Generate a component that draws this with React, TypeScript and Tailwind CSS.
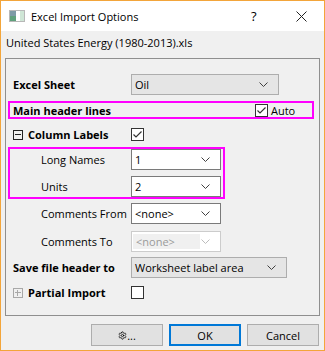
import { Settings } from "lucide-react";

const Chevron = ({ muted = false }: { muted?: boolean }) => (
  <svg width="9" height="5" viewBox="0 0 9 5" className="shrink-0">
    <polyline
      points="0.5,0.5 4.5,4.5 8.5,0.5"
      fill="none"
      stroke={muted ? "#bcbcbc" : "#404040"}
      strokeWidth="1"
    />
  </svg>
);

const Check = ({ checked = false }: { checked?: boolean }) => (
  <div className="w-[13px] h-[13px] border border-[#333] bg-white shrink-0 flex items-center justify-center">
    {checked && (
      <svg width="11" height="11" viewBox="0 0 11 11">
        <polyline points="1.5,5.5 4,8 9.5,2.5" fill="none" stroke="#333" strokeWidth="1.2" />
      </svg>
    )}
  </div>
);

interface ComboProps {
  value: string;
  width: string;
  variant?: "gray" | "white" | "disabled";
}

const Combo = ({ value, width, variant = "white" }: ComboProps) => {
  if (variant === "disabled") {
    return (
      <div className={`${width} h-[21px] border border-[#cccccc] bg-white flex items-center pl-[1px] pr-[10px] shrink-0`}>
        <div className="w-[67px] h-[15px] bg-[#f0f0f0] text-[#9a9a9a] flex items-center pl-[3px]">{value}</div>
        <div className="flex-1" />
        <Chevron muted />
      </div>
    );
  }
  const look =
    variant === "gray" ? "border-[#adadad] bg-[#e5e5e5]" : "border-[#7a7a7a] bg-white";
  return (
    <div className={`${width} h-[21px] border ${look} flex items-center pl-[3px] pr-[10px] shrink-0`}>
      <span className="flex-1">{value}</span>
      <Chevron />
    </div>
  );
};

const TreeBox = ({ open }: { open: boolean }) =>
  open ? (
    <div className="w-[10px] h-[10px] border border-[#222] flex items-center justify-center shrink-0">
      <div className="w-[6px] h-[1px] bg-[#222]" />
    </div>
  ) : (
    <div className="w-[10px] h-[10px] border border-[#a8a8a8] relative shrink-0">
      <div className="absolute left-[1px] top-[3px] w-[6px] h-[1px] bg-[#a8a8a8]" />
      <div className="absolute left-[3px] top-[1px] w-[1px] h-[6px] bg-[#a8a8a8]" />
    </div>
  );

const Button = ({ children, primary = false }: { children: React.ReactNode; primary?: boolean }) => (
  <div
    className={`w-[72px] h-[22px] bg-[#e1e1e1] flex items-center justify-center ${
      primary ? "border-2 border-[#0078d7]" : "border border-[#adadad]"
    }`}
  >
    {children}
  </div>
);

export default function App() {
  return (
    <div className="w-[325px] h-[351px] border border-[#f3a53a] bg-[#f0f0f0] flex flex-col font-['Open_Sans',sans-serif] text-[11px] text-black leading-[15px]">
      {/* title bar */}
      <div className="h-[30px] bg-white flex items-center pl-[8px] shrink-0">
        <svg width="16" height="12" viewBox="0 0 16 12" className="shrink-0">
          <rect x="0.5" y="0.5" width="15" height="11" fill="#fff" stroke="#b8b8b8" />
          <rect x="1" y="1" width="6" height="10" fill="#7d9aa6" />
          <rect x="1" y="6" width="6" height="5" fill="#5fa07c" />
          <rect x="11" y="1" width="4" height="10" fill="#cfe6d6" />
        </svg>
        <span className="ml-[6px]">Excel Import Options</span>
        <div className="flex-1" />
        <span className="text-[13px] w-[10px] mr-[35px]">?</span>
        <svg width="11" height="11" viewBox="0 0 11 11" className="mr-[17px]">
          <path d="M0.5 0.5 L10.5 10.5 M10.5 0.5 L0.5 10.5" stroke="#222" strokeWidth="1" />
        </svg>
      </div>

      {/* file name */}
      <div className="h-[27px] pl-[5px] pt-[4px] shrink-0">United States Energy (1980-2013).xls</div>

      {/* group box */}
      <div className="ml-[4px] w-[315px] h-[258px] border border-[#8f8f8f] flex flex-col shrink-0">
        <div className="mt-[15px] flex items-center pl-[7px]">
          <span className="w-[118px] font-bold">Excel Sheet</span>
          <Combo value="Oil" width="w-[148px]" variant="gray" />
        </div>

        <div className="mt-[6px] ml-[2px] w-[306px] h-[18px] border-2 border-[#ff00ff] flex items-center pl-[3px]">
          <span className="w-[242px] font-bold">Main header lines</span>
          <Check checked />
          <span className="ml-[3px]">Auto</span>
        </div>

        <div className="mt-[9px] h-[13px] flex items-center pl-[7px]">
          <TreeBox open />
          <span className="ml-[5px] w-[103px] font-bold">Column Labels</span>
          <Check checked />
        </div>

        <div className="mt-[6px] ml-[2px] w-[217px] h-[52px] border-2 border-[#ff00ff] flex flex-col pl-[31px]">
          <div className="flex items-center">
            <span className="w-[90px]">Long Names</span>
            <Combo value="1" width="w-[90px]" />
          </div>
          <div className="mt-[6px] flex items-center">
            <span className="w-[90px]">Units</span>
            <Combo value="2" width="w-[90px]" />
          </div>
        </div>

        <div className="mt-[4px] flex items-center pl-[35px]">
          <span className="w-[90px]">Comments From</span>
          <Combo value="<none>" width="w-[90px]" />
        </div>

        <div className="mt-[7px] flex items-center pl-[35px]">
          <span className="w-[90px]">Comments To</span>
          <Combo value="<none>" width="w-[90px]" variant="disabled" />
        </div>

        <div className="mt-[5px] flex items-center pl-[7px]">
          <span className="w-[118px] font-bold">Save file header to</span>
          <Combo value="Worksheet label area" width="w-[156px]" variant="gray" />
        </div>

        <div className="mt-[8px] h-[13px] flex items-center pl-[7px]">
          <TreeBox open={false} />
          <span className="ml-[5px] w-[103px] font-bold">Partial Import</span>
          <Check />
        </div>
      </div>

      {/* buttons */}
      <div className="mt-[8px] flex justify-end gap-[6px] pr-[5px]">
        <Button>
          <Settings size={9} strokeWidth={2} />
          <span>...</span>
        </Button>
        <Button primary>OK</Button>
        <Button>Cancel</Button>
      </div>
    </div>
  );
}
